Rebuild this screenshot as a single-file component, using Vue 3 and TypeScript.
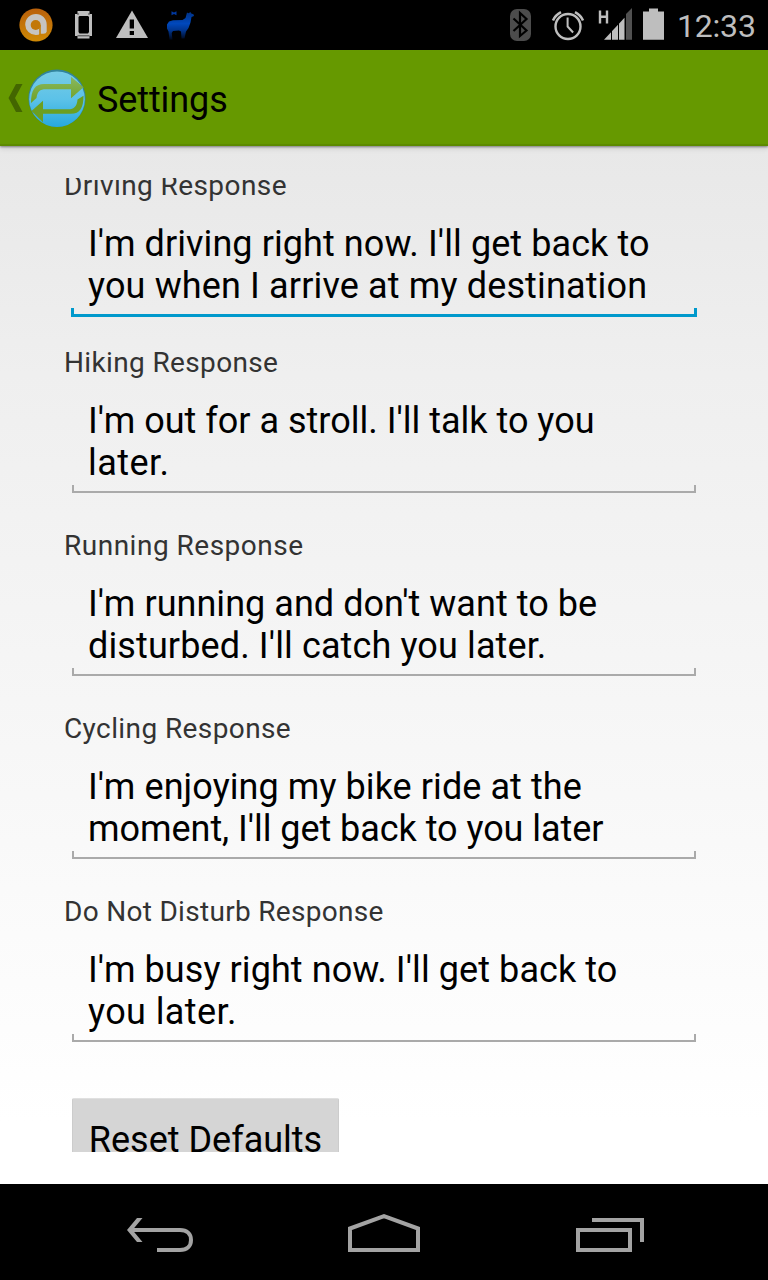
<script setup lang="ts">
interface Line { text: string; cls: string }
interface Field { label: string; cls: string; lines: Line[] }

const fields: Field[] = [
  { label: 'Driving Response', cls: 'driving focused', lines: [
    { text: "I'm driving right now. I'll get back to", cls: 'd1' },
    { text: 'you when I arrive at my destination', cls: 'd2' },
  ] },
  { label: 'Hiking Response', cls: 'hiking', lines: [
    { text: "I'm out for a stroll. I'll talk to you", cls: 'h1' },
    { text: 'later.', cls: 'h2' },
  ] },
  { label: 'Running Response', cls: 'running', lines: [
    { text: "I'm running and don't want to be", cls: 'r1' },
    { text: "disturbed. I'll catch you later.", cls: 'r2' },
  ] },
  { label: 'Cycling Response', cls: 'cycling', lines: [
    { text: "I'm enjoying my bike ride at the", cls: 'c1' },
    { text: "moment, I'll get back to you later", cls: 'c2' },
  ] },
  { label: 'Do Not Disturb Response', cls: 'dnd', lines: [
    { text: "I'm busy right now. I'll get back to", cls: 'b1' },
    { text: 'you later.', cls: 'b2' },
  ] },
]
</script>

<template>
  <div class="screen">
    <header class="status">
      <svg class="notifications" width="220" height="50" viewBox="0 0 220 50">
        <defs>
          <linearGradient id="orange" x1="0" y1="0" x2="0" y2="1"><stop offset="0" stop-color="#b9600b" /><stop offset="1" stop-color="#cf8a05" /></linearGradient>
          <linearGradient id="llama" gradientUnits="userSpaceOnUse" x1="0" y1="11" x2="0" y2="39"><stop offset="0" stop-color="#003080" /><stop offset=".45" stop-color="#0048bc" /><stop offset=".7" stop-color="#00348c" /><stop offset="1" stop-color="#000a20" /></linearGradient>
        </defs>
        <circle cx="36" cy="25" r="16.600" fill="url(#orange)" />
        <path d="M25.200 24.700a10.700 10.700 0 0 1 21.500 0v7q-.5 2-3.200 2h-3q-2 1.300-4.600 1.300a10.600 10.600 0 0 1-10.700-10.300z" fill="#c6c4c0" />
        <circle cx="35.700" cy="25" r="5" fill="#c27808" />
        <path d="M40 25v10" stroke="#c57e07" stroke-width="1.600" />
        <path d="M77.500 11h12v3h2.500v22h-2.500v2.500h-12V36H75V14h2.500z" fill="#bebebe" />
        <path d="M79.500 16h8.500l1 1v15l-1 1.500h-8.500l-1-1.500V17z" fill="#000" />
        <path d="M77 14h2m9 0h2M77.500 35.800h12" stroke="#444" stroke-width="1" />
        <path d="M132 10.500l16 27.500h-32z" fill="#bebebe" />
        <path d="M129.700 19.500h4.300v9h-4.300zM129.700 31h4.300v4h-4.300z" fill="#000" />
        <path d="M187 12.500l1.500.8 2-1.300.8 1.500 2.200.8.500 1.700-2.500 1-1 5.500-2 5.500-2.500 3.500-1.500 7h-3l-.5-7-2-1-6 .5-1.300 2 .8 6.500h-3l-1-8-1.500-3v-4l2-3 4-1.200 9.500-.3 3-2z" fill="url(#llama)" />
        <path d="M171.500 11.300l2.500 1.200 2.500-1.200v4l-2.500-1.200-2.500 1.200z" fill="#0038a0" />
      </svg>
      <div class="system">
        <svg width="180" height="50" viewBox="490 0 180 50">
          <rect x="510" y="9" width="21" height="32" rx="7" fill="#4c4c4c" />
          <path d="M513.500 18.500l13 12-6.500 5.500v-23l6.500 6-13 12" fill="none" stroke="#000" stroke-width="2.200" />
          <g fill="none" stroke="#bebebe">
            <circle cx="568" cy="26.500" r="12.500" stroke-width="2.400" />
            <path d="M567.600 17.500v9l5.500 6" stroke-width="2" />
            <path d="M553 20.500q2.500-5.500 8-8.300M583 20.500q-2.500-5.500-8-8.300" stroke-width="2.600" />
          </g>
          <path d="M600 10.500v13M607 10.500v13M600 16.800h7" stroke="#bebebe" stroke-width="2.400" fill="none" />
          <path d="M604 39.800l20.500-22v22z" fill="#bebebe" />
          <path d="M626 14l6-6v31.800h-6z" fill="#505050" />
          <path d="M611.500 30v10M618.500 22v18M625.500 14v26" stroke="#000" stroke-width="1" />
          <path d="M649 8.500h9v3h6v28.300h-21V11.500h6z" fill="#bebebe" />
        </svg>
        <span class="clock">12:33</span>
      </div>
    </header>

    <div class="action-bar">
      <svg width="92" height="96" viewBox="0 50 92 96">
        <defs>
          <linearGradient id="ball" x1="0" y1="0" x2="0" y2="1"><stop offset="0" stop-color="#77cce6" /><stop offset=".5" stop-color="#5cc2e8" /><stop offset="1" stop-color="#27a9dc" /></linearGradient>
          <linearGradient id="arrowTop" x1="0" y1="0" x2="0" y2="1"><stop offset="0" stop-color="#8ab860" /><stop offset="1" stop-color="#6ea024" /></linearGradient>
        </defs>
        <path d="M16 84h6.500L15 98l7.500 14H16L8.500 98z" fill="#436600" />
        <circle cx="57" cy="98.200" r="28.600" fill="#31849c" />
        <circle cx="57" cy="99.200" r="27.800" fill="url(#ball)" />
        <path d="M31 103c0-13 4-19 13-19h27v-7.300l12.500 10.600L71 98.300v-9H46c-6.500 0-8.500 2.500-9.500 8.700z" fill="url(#arrowTop)" />
        <path d="M83.500 95.700c0 12-3.500 18-12.500 18H43v8.500L31.500 111 43 100.700v8.600h25c6.500 0 9-3.300 9.500-9.800z" fill="#6c9f20" />
      </svg>
      <h1>Settings</h1>
    </div>

    <main class="content">
      <div class="scroll">
        <section v-for="f in fields" :key="f.label" class="field" :class="f.cls">
          <label>{{ f.label }}</label>
          <div class="input">
            <div v-for="l in f.lines" :key="l.text" class="line" :class="l.cls">{{ l.text }}</div>
          </div>
        </section>
        <button class="reset">Reset Defaults</button>
      </div>
    </main>

    <nav class="nav">
      <svg width="768" height="96" viewBox="0 1184 768 96" fill="none" stroke="#a3a3a3" stroke-width="4">
        <path d="M130 1230h50c7 0 11 4 11 10s-4 10-11 10h-23" />
        <path d="M127 1230l10-12h5.500l-10 12 10 12H137z" fill="#a3a3a3" stroke="none" />
        <path d="M350 1250v-21.500l34-12.300 34 12.300V1250z" />
        <path d="M578 1230h52v20h-52zM592 1220h50v22" />
      </svg>
    </nav>
  </div>
</template>

<style>
body { margin: 0; background: #000; }
</style>

<style scoped>
.screen { width: 768px; height: 1280px; display: flex; flex-direction: column; overflow: hidden; font-family: Roboto, sans-serif; color: #000; }
.status { height: 50px; flex: none; background: #000; display: flex; justify-content: space-between; }
.system { display: flex; width: 278px; }
.system svg { flex: none; }
.clock { color: #bebebe; font-size: 32px; line-height: 52px; font-weight: 400; white-space: nowrap; margin-left: 7px; letter-spacing: -0.2px; }
.action-bar { height: 96px; flex: none; background: #669900; display: flex; box-shadow: inset 0 -3px 1px -1px #5c8a00, 0 1px 2px rgba(0,0,0,.4), 0 3px 5px rgba(0,0,0,.1); z-index: 1; }
h1 { margin: 0 0 0 5px; font-size: 36px; line-height: 100px; font-weight: 400; letter-spacing: -0.1px; }
.content { flex: none; box-sizing: border-box; height: 1038px; padding: 32px 64px; background: linear-gradient(#e8e8e8 0%, #efefef 22%, #fff 94%); }
.scroll { height: 974px; overflow: hidden; display: flex; flex-direction: column; align-items: stretch; }
.field { flex: none; margin-bottom: 35px; }
.field:first-child { margin-top: -10px; margin-bottom: 28px; }
label { display: block; height: 34px; line-height: 36px; font-size: 28px; color: #333; white-space: nowrap; }
.driving label { letter-spacing: .42px; }
.hiking label { letter-spacing: .36px; }
.running label { letter-spacing: .5px; }
.cycling label { letter-spacing: .4px; }
.dnd label { letter-spacing: .3px; }
.input { box-sizing: border-box; height: 93px; margin: 21px 8px 0; padding-left: 16px; font-size: 36px; line-height: 42px; background: linear-gradient(#aaa, #aaa) left bottom / 100% 2px no-repeat, linear-gradient(#aaa, #aaa) left bottom / 2px 8px no-repeat, linear-gradient(#aaa, #aaa) right bottom / 2px 8px no-repeat; }
.focused .input { height: 94px; margin: 21px 7px 0; padding-left: 17px; background: linear-gradient(#0099cc, #0099cc) left bottom / 100% 3px no-repeat, linear-gradient(#0099cc, #0099cc) left bottom / 3px 9px no-repeat, linear-gradient(#0099cc, #0099cc) right bottom / 3px 9px no-repeat; }
.line { height: 42px; white-space: nowrap; }
.d1 { letter-spacing: .08px; }
.d2 { letter-spacing: .14px; }
.h2 { letter-spacing: .45px; }
.r1 { letter-spacing: .04px; }
.r2 { letter-spacing: .12px; }
.c1 { letter-spacing: .07px; }
.c2 { letter-spacing: -.05px; }
.b1 { letter-spacing: .08px; }
.b2 { letter-spacing: .4px; }
.reset { flex: none; align-self: flex-start; margin: 21px 0 0 8px; width: 267px; height: 84px; padding: 0; border: 1px solid #ccc; border-top-color: #e0e0e0; border-radius: 2px; background: #d5d5d5; font: 400 36px/82px Roboto, sans-serif; color: #000; white-space: nowrap; }
.nav { height: 96px; flex: none; background: #000; }
.nav svg { display: block; }
</style>
